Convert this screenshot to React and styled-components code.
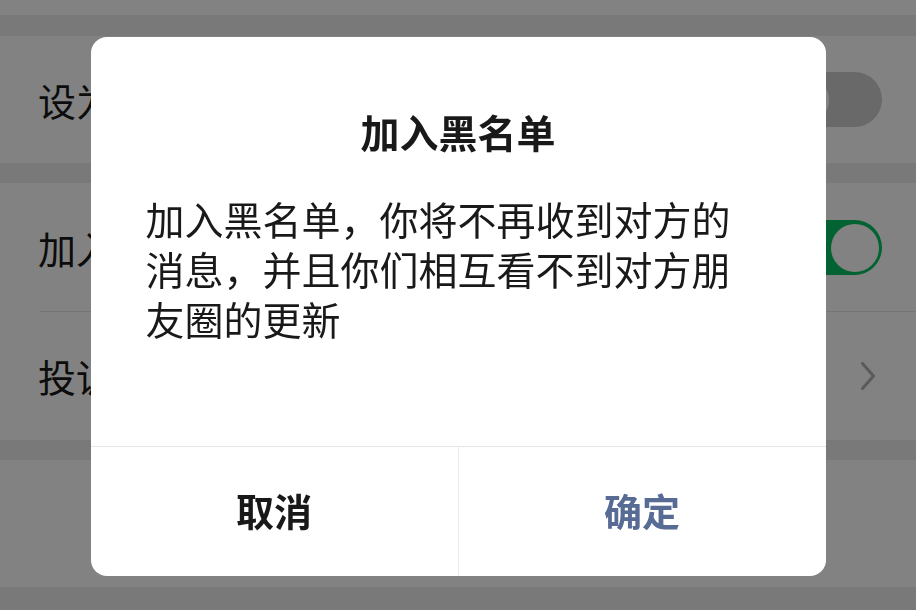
import styled, { createGlobalStyle } from 'styled-components'

const GlobalStyle = createGlobalStyle`
  html, body {
    margin: 0;
    padding: 0;
    background: #ededed;
    font-family: "Noto Sans CJK SC", "Noto Sans", sans-serif;
  }
`

const Page = styled.div`
  width: 916px;
  height: 610px;
  overflow: hidden;
  background: #ededed;
  display: flex;
  flex-direction: column;
`

const Gap = styled.div`
  flex: none;
  height: ${p => p.h}px;
`

const Cell = styled.div`
  flex: none;
  height: ${p => p.h}px;
  background: #ffffff;
  display: flex;
  align-items: center;
  justify-content: ${p => (p.center ? 'center' : 'space-between')};
  padding: 0 34px 0 38px;
  position: relative;
  color: ${p => p.color || '#191919'};
  font-size: 38px;
  ${p =>
    p.divider &&
    `&::after {
      content: '';
      position: absolute;
      left: 40px;
      right: 0;
      bottom: 0;
      height: 1px;
      background: #e5e5e5;
    }`}
`

const Label = styled.span`
  line-height: 1;
`

const Switch = styled.div`
  width: 104px;
  height: 55px;
  border-radius: 28px;
  background: ${p => (p.on ? '#07c160' : '#cecece')};
  display: flex;
  align-items: center;
  justify-content: ${p => (p.on ? 'flex-end' : 'flex-start')};
  padding: 0 3px;
  box-sizing: border-box;
`

const Knob = styled.div`
  width: 48px;
  height: 48px;
  border-radius: 50%;
  background: #ffffff;
`

const Chevron = styled.svg`
  width: 14px;
  height: 28px;
  margin-right: 7px;
`

const Overlay = styled.div`
  position: fixed;
  inset: 0;
  padding-top: 2px;
  background: rgba(0, 0, 0, 0.49);
  display: flex;
  align-items: center;
  justify-content: center;
`

const Dialog = styled.div`
  width: 735px;
  height: 539px;
  background: #ffffff;
  border-radius: 16px;
  display: flex;
  flex-direction: column;
  overflow: hidden;
`

const Title = styled.div`
  padding-top: 69px;
  text-align: center;
  font-size: 39px;
  line-height: 50px;
  font-weight: 700;
  color: #191919;
`

const Body = styled.div`
  flex: 1;
  padding: 37px 80px 0 55px;
  font-size: 39px;
  line-height: 50px;
  color: #191919;
`

const Actions = styled.div`
  height: 129px;
  border-top: 1px solid #e5e5e5;
  display: grid;
  grid-template-columns: 367px 1fr;
`

const Action = styled.div`
  display: flex;
  align-items: center;
  justify-content: center;
  font-size: 38px;
  font-weight: 700;
  color: ${p => p.color};
  padding-bottom: 4px;
  & + & {
    border-left: 1px solid #ececec;
  }
`

export default function App() {
  return (
    <>
      <GlobalStyle />
      <Page>
        <Cell h={15} />
        <Gap h={21} />
        <Cell h={127}>
          <Label>设为星标朋友</Label>
          <Switch>
            <Knob />
          </Switch>
        </Cell>
        <Gap h={20} />
        <Cell h={129} divider>
          <Label>加入黑名单</Label>
          <Switch on>
            <Knob />
          </Switch>
        </Cell>
        <Cell h={128}>
          <Label>投诉</Label>
          <Chevron viewBox="0 0 14 28">
            <polyline points="1.5,1.5 12.5,14 1.5,26.5" fill="none" stroke="#b0b0b0" strokeWidth="3" strokeLinecap="round" strokeLinejoin="round" />
          </Chevron>
        </Cell>
        <Gap h={20} />
        <Cell h={127} center color="#fa5151">
          <Label>删除</Label>
        </Cell>
        <Gap h={23} />
      </Page>
      <Overlay>
        <Dialog>
          <Title>加入黑名单</Title>
          <Body>加入黑名单，你将不再收到对方的消息，并且你们相互看不到对方朋友圈的更新</Body>
          <Actions>
            <Action color="#191919">取消</Action>
            <Action color="#576b95">确定</Action>
          </Actions>
        </Dialog>
      </Overlay>
    </>
  )
}
